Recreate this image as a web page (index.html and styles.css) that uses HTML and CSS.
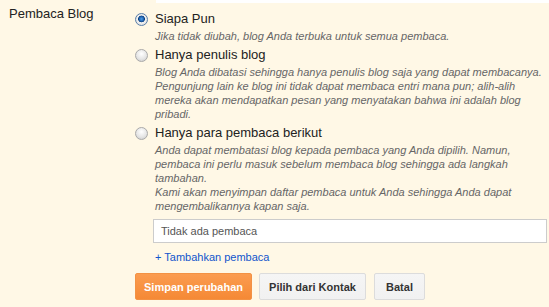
FILE: index.html
```html
<!DOCTYPE html>
<html lang="id">
<head>
    <meta charset="UTF-8">
    <title>Pembaca Blog</title>
    <link rel="stylesheet" href="styles.css">
</head>
<body>
    <div class="top-field"></div>
    <div class="setting-row">
        <div class="setting-label">Pembaca Blog</div>
        <div class="setting-options">
            <div class="option">
                <div class="option-title"><span class="radio checked"></span>Siapa Pun</div>
                <div class="option-desc">Jika tidak diubah, blog Anda terbuka untuk semua pembaca.</div>
            </div>
            <div class="option">
                <div class="option-title"><span class="radio"></span>Hanya penulis blog</div>
                <div class="option-desc">Blog Anda dibatasi sehingga hanya penulis blog saja yang dapat membacanya. Pengunjung lain ke blog ini tidak dapat membaca entri mana pun; alih-alih mereka akan mendapatkan pesan yang menyatakan bahwa ini adalah blog pribadi.</div>
            </div>
            <div class="option">
                <div class="option-title"><span class="radio"></span>Hanya para pembaca berikut</div>
                <div class="option-desc">Anda dapat membatasi blog kepada pembaca yang Anda dipilih. Namun, pembaca ini perlu masuk sebelum membaca blog sehingga ada langkah tambahan.<br>Kami akan menyimpan daftar pembaca untuk Anda sehingga Anda dapat mengembalikannya kapan saja.</div>
                <div class="reader-box">Tidak ada pembaca</div>
                <a href="#" class="add-link">+ Tambahkan pembaca</a>
            </div>
            <div class="actions">
                <button class="btn btn-save">Simpan perubahan</button>
                <button class="btn btn-contacts">Pilih dari Kontak</button>
                <button class="btn btn-cancel">Batal</button>
            </div>
        </div>
    </div>
</body>
</html>
```

FILE: styles.css
```css
body {
    font-family: "Liberation Sans", Arial, sans-serif;
    background-color: #fff8e6;
    color: #222;
    margin: 0;
    padding: 0;
}

.top-field {
    height: 3px;
    margin-left: 156px;
    background-color: #fff;
}

.setting-row {
    display: flex;
    padding-left: 9px;
}

.setting-label {
    width: 126px;
    padding-top: 3px;
    font-size: 13px;
    line-height: 16px;
}

.setting-options {
    padding-top: 8px;
}

.option {
    margin-bottom: 4px;
}

.option-title {
    display: flex;
    align-items: center;
    font-size: 13px;
    line-height: 16px;
}

.radio {
    width: 11px;
    height: 11px;
    margin-right: 7px;
    border: 1px solid #a9a9a9;
    border-radius: 50%;
    background: radial-gradient(circle at 50% 35%, #fff 0%, #e6e6e6 55%, #c8c8c8 100%);
}

.radio.checked {
    border-color: #5a7fa8;
    background: radial-gradient(circle at 50% 45%, #4fa0e8 0%, #1f62b0 28%, #0d3f7a 38%, #f2f2f2 45%, #d4d4d4 100%);
}

.option-desc {
    margin: 2px 0 0 20px;
    width: 394px;
    font-size: 11px;
    line-height: 14px;
    font-style: italic;
    color: #666;
}

.reader-box {
    margin: 6px 0 0 18px;
    width: 385px;
    height: 22px;
    padding-left: 7px;
    border: 1px solid #ccc;
    background-color: #fff;
    font-size: 11px;
    line-height: 22px;
    color: #555;
}

.add-link {
    display: block;
    margin: 7px 0 0 20px;
    font-size: 11px;
    line-height: 14px;
    color: #15c;
    text-decoration: none;
}

.actions {
    display: flex;
    gap: 7px;
    margin-top: 9px;
}

.btn {
    height: 27px;
    padding: 0;
    border: 1px solid #dcdcdc;
    border-radius: 2px;
    background: linear-gradient(#f5f5f5, #f1f1f1);
    font-family: "Liberation Sans", Arial, sans-serif;
    font-size: 11px;
    font-weight: bold;
    color: #333;
    white-space: nowrap;
}

.btn-save {
    width: 117px;
    border-color: #f39244;
    background: linear-gradient(#fb9c50, #f58935);
    color: #fff;
}

.btn-contacts {
    width: 107px;
}

.btn-cancel {
    width: 51px;
    margin-left: 1px;
}
```
